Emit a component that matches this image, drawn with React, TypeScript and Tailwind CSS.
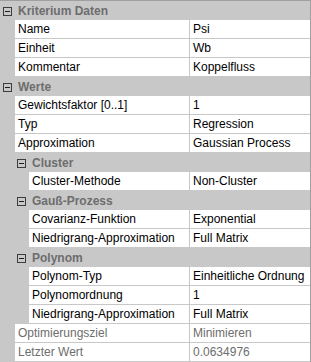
import React from "react";

type Row =
  | { kind: "cat"; label: string; level: number }
  | { kind: "prop"; label: string; value: string; level: number; dim?: boolean };

const rows: Row[] = [
  { kind: "cat", label: "Kriterium Daten", level: 0 },
  { kind: "prop", label: "Name", value: "Psi", level: 1 },
  { kind: "prop", label: "Einheit", value: "Wb", level: 1 },
  { kind: "prop", label: "Kommentar", value: "Koppelfluss", level: 1 },
  { kind: "cat", label: "Werte", level: 0 },
  { kind: "prop", label: "Gewichtsfaktor [0..1]", value: "1", level: 1 },
  { kind: "prop", label: "Typ", value: "Regression", level: 1 },
  { kind: "prop", label: "Approximation", value: "Gaussian Process", level: 1 },
  { kind: "cat", label: "Cluster", level: 1 },
  { kind: "prop", label: "Cluster-Methode", value: "Non-Cluster", level: 2 },
  { kind: "cat", label: "Gauß-Prozess", level: 1 },
  { kind: "prop", label: "Covarianz-Funktion", value: "Exponential", level: 2 },
  { kind: "prop", label: "Niedrigrang-Approximation", value: "Full Matrix", level: 2 },
  { kind: "cat", label: "Polynom", level: 1 },
  { kind: "prop", label: "Polynom-Typ", value: "Einheitliche Ordnung", level: 2 },
  { kind: "prop", label: "Polynomordnung", value: "1", level: 2 },
  { kind: "prop", label: "Niedrigrang-Approximation", value: "Full Matrix", level: 2 },
  { kind: "prop", label: "Optimierungsziel", value: "Minimieren", level: 1, dim: true },
  { kind: "prop", label: "Letzter Wert", value: "0.0634976", level: 1, dim: true },
];

function Minus() {
  return (
    <div className="w-[9px] h-[9px] border border-[#3c3c3c] flex items-center justify-center">
      <div className="w-[5px] h-px bg-[#1e1e1e]" />
    </div>
  );
}

export default function App() {
  return (
    <div
      className="w-[311px] h-[362px] bg-[#c8c8c8] border-t border-r border-[#a0a0a0] overflow-hidden text-[12px] leading-none"
      style={{ fontFamily: '"Liberation Sans", Arial, sans-serif' }}
    >
      {rows.map((r, i) => {
        if (r.kind === "cat") {
          return (
            <div key={i} className="flex h-[19px] bg-[#c8c8c8]">
              <div className={r.level === 0 ? "w-[3px]" : "w-[17px]"} />
              <div className="w-[12px] flex items-center pt-px">
                <Minus />
              </div>
              <div className="flex items-center pl-[3px] font-bold text-[#6d6d6d]">{r.label}</div>
            </div>
          );
        }
        const gutter = r.level === 2 ? "w-[29px]" : "w-[15px]";
        const color = r.dim ? "text-[#6d6d6d]" : "text-black";
        return (
          <div key={i} className="flex h-[19px]">
            <div className={`${gutter} shrink-0 bg-[#c8c8c8]`} />
            <div className="flex-1 flex bg-white border-b border-[#c8c8c8]">
              <div className={`flex-1 flex items-center pl-[3px] border-r border-[#c8c8c8] whitespace-nowrap overflow-hidden ${color}`}>
                {r.label}
              </div>
              <div className={`w-[120px] shrink-0 flex items-center pl-[3px] whitespace-nowrap overflow-hidden ${color}`}>
                {r.value}
              </div>
            </div>
          </div>
        );
      })}
    </div>
  );
}
